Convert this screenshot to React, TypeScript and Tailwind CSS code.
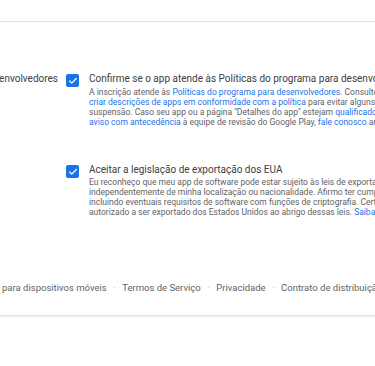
import { Check } from 'lucide-react';

function Box() {
  return (
    <span className="flex h-[13px] w-[13px] shrink-0 items-center justify-center rounded-[2px] bg-[#1a73e8]">
      <Check className="h-[10px] w-[10px] text-white" strokeWidth={3} />
    </span>
  );
}

const link = 'text-[#1a73e8]';

export default function App() {
  return (
    <div className="h-[366px] w-[375px] overflow-hidden bg-white font-['Roboto',sans-serif]">
      <div className="pt-[21px]">
        <div className="h-px bg-[#e0e0e0]" />
      </div>

      <div className="mt-[51px] flex flex-col gap-[37px]">
        {/* policy item */}
        <div className="flex">
          <div className="flex w-[58px] shrink-0 justify-end overflow-hidden whitespace-nowrap text-[10px] leading-[12px] text-[#3c4043]">
            <span>Políticas do programa para desenvolvedores</span>
          </div>
          <div className="ml-[8px] mr-[10px] pt-px">
            <Box />
          </div>
          <div className="whitespace-nowrap">
            <div className="text-[10px] leading-[12px] text-[#3c4043]">
              Confirme se o app atende às Políticas do programa para desenvolvedores
            </div>
            <div className="mt-[2px] text-[8.5px] leading-[10px] text-[#5f6368]">
              <div>
                A inscrição atende às <span className={link}>Políticas do programa para desenvolvedores</span>. Consulte as dicas sobre como
              </div>
              <div>
                <span className={link}>criar descrições de apps em conformidade com a política</span> para evitar alguns dos motivos mais comuns de
              </div>
              <div>
                suspensão. Caso seu app ou a página "Detalhes do app" estejam <span className={link}>qualificados para receber um</span>
              </div>
              <div>
                <span className={link}>aviso com antecedência</span> à equipe de revisão do Google Play, <span className={link}>fale conosco</span> antes de publicar.
              </div>
            </div>
          </div>
        </div>

        {/* export item */}
        <div className="flex">
          <div className="w-[58px] shrink-0" />
          <div className="ml-[8px] mr-[10px] pt-px">
            <Box />
          </div>
          <div className="whitespace-nowrap">
            <div className="text-[10px] leading-[12px] text-[#3c4043]">
              Aceitar a legislação de exportação dos EUA
            </div>
            <div className="mt-[1px] text-[8.5px] leading-[10px] text-[#5f6368]">
              <div>Eu reconheço que meu app de software pode estar sujeito às leis de exportação dos Estados Unidos,</div>
              <div>independentemente de minha localização ou nacionalidade. Afirmo ter cumprido todas essas leis,</div>
              <div>incluindo eventuais requisitos de software com funções de criptografia. Certifico que o app está</div>
              <div>
                autorizado a ser exportado dos Estados Unidos ao abrigo dessas leis. <span className={link}>Saiba mais</span>
              </div>
            </div>
          </div>
        </div>
      </div>

      <footer className="mt-[65px] border-b border-[#e0e0e0] pb-[21px] shadow-[0_1px_2px_rgba(0,0,0,0.08)]">
        <div className="ml-[2px] flex items-center gap-[6.5px] whitespace-nowrap text-[9.5px] leading-[12px] text-[#5f6368]">
          <span>para dispositivos móveis</span>
          <span className="text-[#bdc1c6]">·</span>
          <span>Termos de Serviço</span>
          <span className="text-[#bdc1c6]">·</span>
          <span>Privacidade</span>
          <span className="text-[#bdc1c6]">·</span>
          <span>Contrato de distribuição do desenvolvedor</span>
        </div>
      </footer>
    </div>
  );
}
